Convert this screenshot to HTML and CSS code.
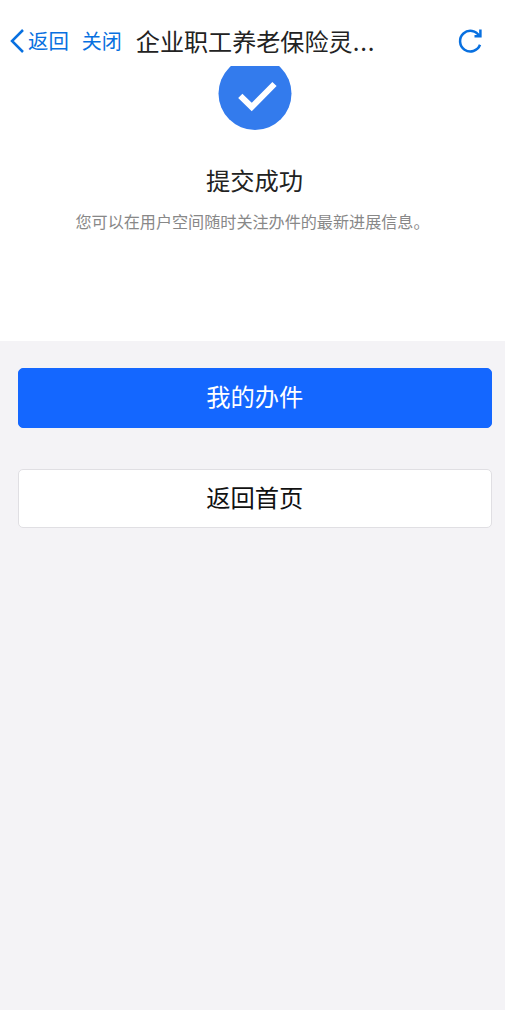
FILE: index.html
```html
<!DOCTYPE html>
<html lang="zh-CN">
<head>
<meta charset="utf-8">
<title>提交成功</title>
<link rel="stylesheet" href="styles.css">
</head>
<body>
<header class="nav">
  <a class="back"><svg class="chevron" width="14" height="26" viewBox="0 0 14 26"><path d="M13 2 L2 13 L13 24"/></svg><span>返回</span></a>
  <a class="close">关闭</a>
  <h1 class="title">企业职工养老保险灵<span class="dots">...</span></h1>
  <svg class="refresh" width="26" height="26" viewBox="0 0 26 26"><path d="M22.4 8.2 A10.3 10.3 0 1 0 23 16.8"/><path d="M23.4 1.5 V8.2 H17.5"/></svg>
</header>
<main>
  <section class="result">
    <svg class="success" width="74" height="64" viewBox="0 0 74 64"><circle cx="37" cy="27.5" r="36.5"/><path d="M22.3 29.8 L33.7 41 L56.5 18"/></svg>
    <h2 class="heading">提交成功</h2>
    <p class="note">您可以在用户空间随时关注办件的最新进展信息。</p>
  </section>
  <div class="actions">
    <button class="btn primary">我的办件</button>
    <button class="btn">返回首页</button>
  </div>
</main>
</body>
</html>
```
FILE: styles.css
```css
* { box-sizing: border-box; }
body { margin: 0; min-height: 100vh; background: #f4f3f6; color: #222; font-family: "Noto Sans CJK SC", sans-serif; }
h1, h2, p { margin: 0; font-weight: 400; }
.nav { display: flex; align-items: center; height: 66px; padding: 16px 22px 0 10px; background: #fff; }
.back, .close { display: flex; align-items: center; color: #0870e0; font-size: 20px; line-height: 30px; }
.back { gap: 4px; font-size: 20.4px; }
.back span { padding-bottom: 2px; }
.chevron, .refresh { fill: none; stroke: #0870e0; stroke-width: 2.5; }
.close { margin-left: 13px; }
.title { margin-left: 14px; font-size: 24.1px; line-height: 34px; white-space: nowrap; }
.dots { letter-spacing: 0.8px; }
.refresh { margin-left: auto; }
.result { display: flex; flex-direction: column; align-items: center; height: 275px; background: #fff; }
.success { margin-left: 4px; }
.success circle { fill: #337bed; }
.success path { fill: none; stroke: #fff; stroke-width: 6; }
.heading { margin-top: 32px; margin-left: 4px; font-size: 24.3px; line-height: 36px; }
.note { margin-top: 11px; font-size: 16.1px; line-height: 24px; color: #888; white-space: nowrap; }
.actions { display: flex; flex-direction: column; gap: 41px; padding: 27px 13.5px 0 18px; }
.btn { height: 59px; padding: 0 0 4px; border: 1px solid #e0dfe3; border-radius: 5px; background: #fff; color: #111; font: 24.3px/36px "Noto Sans CJK SC", sans-serif; }
.primary { height: 60px; border-color: #1467ff; background: #1467ff; color: #fff; }
```
